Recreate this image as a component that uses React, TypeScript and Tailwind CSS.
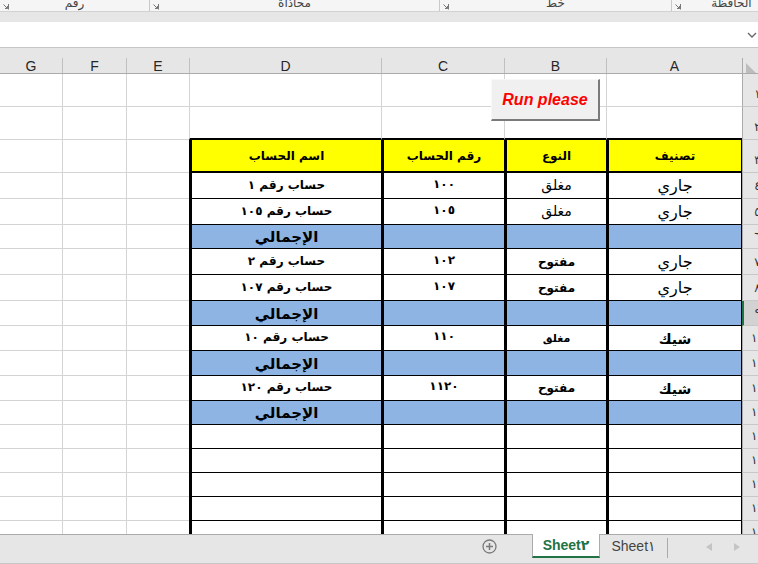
import React from 'react';

type Row = {
  n: string;
  h: string;
  t: 'blank' | 'edge' | 'head' | 'data' | 'total' | 'empty';
  a?: string;
  b?: string;
  c?: string;
  d?: string;
  as?: string;
  bs?: string;
  sel?: boolean;
};

const AR = "font-['DejaVu_Sans',sans-serif]";
const jari = 'text-[16px]';
const shik = 'text-[14px] font-bold';
const closedBig = 'text-[14px]';
const small = 'text-[12px] font-bold';
const smaller = 'text-[11px] font-bold';

const rows: Row[] = [
  { n: '١', h: 'h-[33px]', t: 'blank' },
  { n: '٢', h: 'h-[33px]', t: 'edge' },
  { n: '٣', h: 'h-[33px]', t: 'head' },
  { n: '٤', h: 'h-[26px]', t: 'data', a: 'جاري', b: 'مغلق', c: '١٠٠', d: 'حساب رقم ١', as: jari, bs: closedBig },
  { n: '٥', h: 'h-[26px]', t: 'data', a: 'جاري', b: 'مغلق', c: '١٠٥', d: 'حساب رقم ١٠٥', as: jari, bs: closedBig },
  { n: '٦', h: 'h-[24px]', t: 'total' },
  { n: '٧', h: 'h-[26px]', t: 'data', a: 'جاري', b: 'مفتوح', c: '١٠٢', d: 'حساب رقم ٢', as: jari, bs: small },
  { n: '٨', h: 'h-[26px]', t: 'data', a: 'جاري', b: 'مفتوح', c: '١٠٧', d: 'حساب رقم ١٠٧', as: jari, bs: small },
  { n: '٩', h: 'h-[25px]', t: 'total', sel: true },
  { n: '١٠', h: 'h-[25px]', t: 'data', a: 'شيك', b: 'مغلق', c: '١١٠', d: 'حساب رقم ١٠', as: shik, bs: smaller },
  { n: '١١', h: 'h-[25px]', t: 'total' },
  { n: '١٢', h: 'h-[25px]', t: 'data', a: 'شيك', b: 'مفتوح', c: '١١٢٠', d: 'حساب رقم ١٢٠', as: shik, bs: small },
  { n: '١٣', h: 'h-[24px]', t: 'total' },
  { n: '١٤', h: 'h-[24px]', t: 'empty' },
  { n: '١٥', h: 'h-[24px]', t: 'empty' },
  { n: '١٦', h: 'h-[24px]', t: 'empty' },
  { n: '١٧', h: 'h-[24px]', t: 'empty' },
  { n: '١٨', h: 'h-[24px]', t: 'empty' },
];

const gl = 'border-l border-l-[#d4d4d4]';
const gb = 'border-b border-b-[#d4d4d4]';

function GridRow({ r }: { r: Row }) {
  const table = r.t !== 'blank' && r.t !== 'edge';
  const bottom =
    r.t === 'edge' || r.t === 'head'
      ? 'border-b-2 border-b-black'
      : table
      ? 'border-b border-b-black'
      : 'border-b border-b-[#d4d4d4]';
  const left = table ? 'border-l-[3px] border-l-black' : 'border-l border-l-[#d4d4d4]';
  const bg = r.t === 'head' ? 'bg-[#ffff00]' : r.t === 'total' ? 'bg-[#8db4e2]' : '';
  const tc = `${left} ${bottom} ${bg} flex items-end justify-center pb-[3px] leading-none ${AR}`;

  const d = r.t === 'head' ? 'اسم الحساب' : r.t === 'total' ? 'الإجمالي' : r.d;
  const c = r.t === 'head' ? 'رقم الحساب' : r.c;
  const b = r.t === 'head' ? 'النوع' : r.b;
  const a = r.t === 'head' ? 'تصنيف' : r.a;
  const headTxt = 'text-[12px] font-bold pb-[6px]';

  return (
    <div className={`flex ${r.h}`}>
      <div className={`w-[62px] ${gb}`} />
      <div className={`w-[64px] ${gl} ${gb}`} />
      <div className={`w-[63px] ${gl} ${gb}`} />
      <div className={`w-[192px] ${tc}`} dir="rtl">
        <span className={r.t === 'head' ? headTxt : r.t === 'total' ? 'text-[15px] font-bold' : 'text-[12px] font-bold pb-[4px]'}>{d}</span>
      </div>
      <div className={`w-[123px] ${tc}`} dir="rtl">
        <span className={r.t === 'head' ? headTxt : 'text-[12px] font-bold tracking-[2px] pb-[5px]'}>{c}</span>
      </div>
      <div className={`w-[102px] ${tc}`} dir="rtl">
        <span className={r.t === 'head' ? headTxt : `${r.bs} pb-[3px]`}>{b}</span>
      </div>
      <div className={`w-[136px] ${tc} ${table ? 'border-r border-r-black' : ''}`} dir="rtl">
        <span className={r.t === 'head' ? headTxt : `${r.as} pb-[1px]`}>{a}</span>
      </div>
      <div
        className={`w-[30px] shrink-0 flex items-end justify-center pb-[6px] leading-none text-[12px] text-[#333] ${AR} border-b border-b-[#c8c8c8] ${
          r.sel ? 'bg-[#d2d2d2] border-l-2 border-l-[#217346]' : 'bg-[#e6e6e6] border-l border-l-[#ababab]'
        }`}
      >
        {r.n}
      </div>
    </div>
  );
}

function Launcher() {
  return (
    <svg width="7" height="7" viewBox="0 0 7 7" className="shrink-0">
      <path d="M0.5 0.5 H6.5 V6.5" fill="none" stroke="#777" strokeWidth="1" />
      <path d="M1.5 1.5 L5.5 5.5 M3 5.5 H5.5 V3" fill="none" stroke="#777" strokeWidth="1" />
    </svg>
  );
}

function Ribbon() {
  const groups = [
    { w: 'w-[149px]', label: 'رقم' },
    { w: 'w-[290px]', label: 'محاذاة' },
    { w: 'w-[232px]', label: 'خط' },
    { w: 'w-[120px]', label: 'الحافظة' },
  ];
  return (
    <div className="h-[11px] bg-[#f5f5f5] flex overflow-hidden shrink-0">
      {groups.map((g, i) => (
        <div
          key={i}
          className={`${g.w} shrink-0 relative flex items-end ${i > 0 ? 'border-l border-l-[#c8c8c8]' : ''}`}
        >
          <div className="absolute left-[2px] bottom-[1px] h-[6px] overflow-hidden">
            <div className="-mt-[1px]">
              <Launcher />
            </div>
          </div>
          <div className={`w-full text-center text-[12px] leading-[12px] text-[#444] mb-[2px] ${AR}`} dir="rtl">
            {g.label}
          </div>
        </div>
      ))}
    </div>
  );
}

function ColumnHeaders() {
  const cols = [
    { w: 'w-[62px]', k: 'G', b: '' },
    { w: 'w-[64px]', k: 'F', b: 'border-l border-l-[#c0c0c0]' },
    { w: 'w-[63px]', k: 'E', b: 'border-l border-l-[#c0c0c0]' },
    { w: 'w-[192px]', k: 'D', b: 'border-l border-l-[#c0c0c0]' },
    { w: 'w-[123px]', k: 'C', b: 'border-l border-l-[#c0c0c0]' },
    { w: 'w-[102px]', k: 'B', b: 'border-l border-l-[#c0c0c0]' },
    { w: 'w-[136px]', k: 'A', b: 'border-l border-l-[#c0c0c0]' },
  ];
  return (
    <div className="h-[26px] bg-[#e6e6e6] pt-[10px] border-b border-b-[#ababab] shrink-0">
      <div className="flex h-[15px] w-[772px]">
        {cols.map((c) => (
          <div
            key={c.k}
            className={`${c.w} ${c.b} shrink-0 flex items-center justify-center text-[14px] leading-none text-[#262626]`}
          >
            {c.k}
          </div>
        ))}
        <div className="w-[30px] shrink-0 border-l border-l-[#ababab] pl-[3px] pt-[5px]">
          <svg width="10" height="10" viewBox="0 0 10 10">
            <polygon points="0,0 0,10 10,10" fill="#bdbdbd" />
          </svg>
        </div>
      </div>
    </div>
  );
}

function Tabs() {
  return (
    <div className="h-[30px] shrink-0 border-t border-t-[#ababab] border-b border-b-[#c6c6c6] bg-[#e6e6e6] flex items-start">
      <div className="w-[482px] shrink-0" />
      <div className="w-[15px] h-[23px] shrink-0 flex items-center">
        <svg width="15" height="15" viewBox="0 0 15 15">
          <circle cx="7.5" cy="7.5" r="6.5" fill="none" stroke="#7a7a7a" strokeWidth="1.3" />
          <path d="M7.5 4 V11 M4 7.5 H11" stroke="#7a7a7a" strokeWidth="1.5" />
        </svg>
      </div>
      <div className="w-[35px] shrink-0" />
      <div className="w-[68px] h-[24px] -mt-px shrink-0 bg-white border-x border-x-[#ababab] border-b-2 border-b-[#217346] flex items-center justify-center text-[14px] font-bold text-[#217346] font-['Liberation_Sans','DejaVu_Sans',sans-serif]">
        Sheet٢
      </div>
      <div className="w-[67px] h-[23px] shrink-0 flex items-center justify-center text-[14px] text-[#444] font-['Liberation_Sans','DejaVu_Sans',sans-serif]">
        Sheet١
      </div>
      <div className="w-px h-[20px] mt-[3px] bg-[#ababab] shrink-0" />
      <div className="w-[38px] shrink-0" />
      <div className="h-[23px] flex items-center gap-[22px]">
        <svg width="6" height="8" viewBox="0 0 6 8">
          <polygon points="6,0 6,8 0,4" fill="#c4c4c4" />
        </svg>
        <svg width="6" height="8" viewBox="0 0 6 8">
          <polygon points="0,0 0,8 6,4" fill="#c4c4c4" />
        </svg>
      </div>
    </div>
  );
}

export default function App() {
  return (
    <div className="relative w-[758px] h-[564px] overflow-hidden bg-white flex flex-col font-['Liberation_Sans','DejaVu_Sans',sans-serif] text-black">
      <Ribbon />
      <div className="h-[11px] shrink-0 bg-[#e6e6e6] border-t border-t-[#d2d2d2]" />
      <div className="h-[26px] shrink-0 bg-white border-b border-b-[#c6c6c6] flex items-center justify-end pr-[1px]">
        <svg width="10" height="6" viewBox="0 0 10 6" className="mt-[1px]">
          <path d="M1 1 L5 5 L9 1" fill="none" stroke="#666" strokeWidth="1.3" />
        </svg>
      </div>
      <ColumnHeaders />
      <div className="h-[460px] shrink-0 overflow-hidden">
        <div className="w-[772px]">
          {rows.map((r) => (
            <GridRow key={r.n} r={r} />
          ))}
        </div>
      </div>
      <Tabs />

      <button className="absolute left-[491px] top-[79px] w-[109px] h-[42px] bg-[#f0f0f0] border border-t-[#f8f8f8] border-l-[#f8f8f8] border-r-2 border-b-2 border-r-[#7a7a7a] border-b-[#7a7a7a] flex items-center justify-center">
        <span className="text-[16px] font-bold italic text-[#ff0000] font-['Liberation_Sans',sans-serif]">Run please</span>
      </button>
    </div>
  );
}
